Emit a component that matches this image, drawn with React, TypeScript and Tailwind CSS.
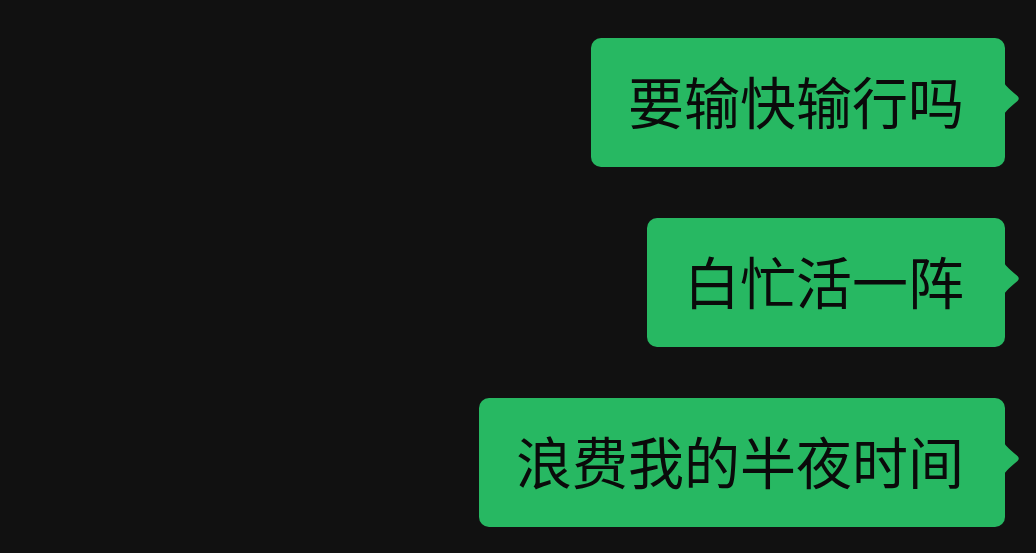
import React from 'react';

const messages = ['要输快输行吗', '白忙活一阵', '浪费我的半夜时间'];

const Bubble = ({ text }: { text: string }) => (
  <div className="relative flex h-[129px] items-center rounded-[10px] bg-[#27b862] pb-[5px] pl-[37px] pr-[41px]">
    <span className="text-[56px] leading-none text-[#0a0a0a]" style={{ fontFamily: '"Noto Sans CJK SC", sans-serif' }}>
      {text}
    </span>
    <svg className="absolute right-[-16px] top-[44px]" width="17" height="34" viewBox="0 0 17 34">
      <path d="M0 0 C1 3 3 5 13.5 14 Q16 16.5 13.5 19 C3 28 1 30 0 33 Z" fill="#27b862" />
    </svg>
  </div>
);

export default function App() {
  return (
    <div className="flex h-[553px] w-[1036px] flex-col items-end gap-[51px] bg-[#111111] pr-[31px] pt-[38px]">
      {messages.map((m) => (
        <Bubble key={m} text={m} />
      ))}
    </div>
  );
}
